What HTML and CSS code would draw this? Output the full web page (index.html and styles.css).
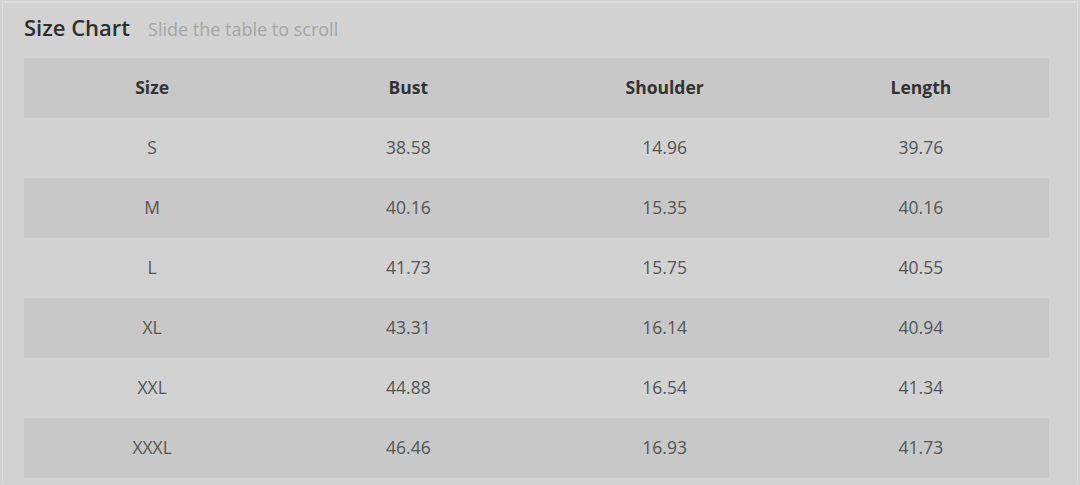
FILE: index.html
```html
<!DOCTYPE html>
<html lang="en">
<head>
<meta charset="utf-8">
<title>Size Chart</title>
<link rel="stylesheet" href="styles.css">
</head>
<body>
<div class="frame">
  <div class="heading">
    <h2 class="title">Size Chart</h2>
    <span class="hint">Slide the table to scroll</span>
  </div>
  <table class="chart">
    <thead>
      <tr><th>Size</th><th>Bust</th><th>Shoulder</th><th>Length</th></tr>
    </thead>
    <tbody>
      <tr><td>S</td><td>38.58</td><td>14.96</td><td>39.76</td></tr>
      <tr><td>M</td><td>40.16</td><td>15.35</td><td>40.16</td></tr>
      <tr><td>L</td><td>41.73</td><td>15.75</td><td>40.55</td></tr>
      <tr><td>XL</td><td>43.31</td><td>16.14</td><td>40.94</td></tr>
      <tr><td>XXL</td><td>44.88</td><td>16.54</td><td>41.34</td></tr>
      <tr><td>XXXL</td><td>46.46</td><td>16.93</td><td>41.73</td></tr>
    </tbody>
  </table>
</div>
</body>
</html>
```
FILE: styles.css
```css
html, body {
  margin: 0;
  padding: 0;
  background: #d2d2d2;
  height: 485px;
  overflow: hidden;
}
body {
  font-family: "Open Sans", "Liberation Sans", sans-serif;
}
.frame {
  margin: 1px 2px 0 2px;
  border-top: 2px solid #dcdcdc;
  border-left: 1px solid #dcdcdc;
  border-right: 1px solid #dcdcdc;
  padding: 9px 28px 0 21px;
  height: 482px;
  box-sizing: border-box;
  background: #d2d2d2;
}
.heading {
  display: flex;
  align-items: baseline;
  gap: 18px;
  height: 33px;
}
.title {
  margin: 0;
  font-size: 22px;
  font-weight: 600;
  color: #2e2e2e;
}
.hint {
  font-size: 18px;
  color: #a6a6a6;
}
.chart {
  width: 100%;
  border-collapse: collapse;
  table-layout: fixed;
  margin-top: 13px;
}
.chart th, .chart td {
  height: 58px;
  padding: 0 0 2px 0;
  text-align: center;
  vertical-align: middle;
  font-size: 17.5px;
}
.chart th {
  font-weight: 700;
  color: #333;
  background: #c8c8c8;
}
.chart td {
  color: #555;
}
.chart tbody tr:nth-child(even) td {
  background: #c8c8c8;
}
```
